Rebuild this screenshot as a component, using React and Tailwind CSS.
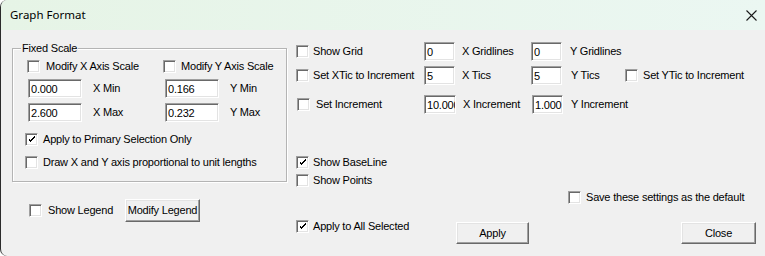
import React from "react";

const font = "font-['Liberation_Sans',Arial,sans-serif] text-[11px] tracking-[-0.2px] text-black";

function Check({ checked }) {
  return (
    <div className="w-[13px] h-[13px] shrink-0 bg-white border border-t-[#a0a0a0] border-l-[#a0a0a0] border-b-white border-r-white shadow-[inset_1px_1px_0_#696969,inset_-1px_-1px_0_#e3e3e3] flex items-center justify-center">
      {checked && (
        <svg width="7" height="7" viewBox="0 0 7 7" shapeRendering="crispEdges">
          <path d="M0 2h1v3h1v1h1v-1h1v-1h1v-1h1v-1h1v-2h-1v1h-1v1h-1v1h-1v1h-1v-1h-1v-1z" fill="#000" />
        </svg>
      )}
    </div>
  );
}

function CheckLabel({ checked, label, gap = "gap-[5px]", className = "" }) {
  return (
    <div className={`flex items-center ${gap} ${className}`}>
      <Check checked={checked} />
      <span className="whitespace-nowrap leading-[13px]">{label}</span>
    </div>
  );
}

function Field({ value, w = "w-[31px]" }) {
  return (
    <input
      readOnly
      value={value}
      className={`${w} h-[19px] shrink-0 bg-white pl-[2px] pr-0 outline-none border border-t-[#a0a0a0] border-l-[#a0a0a0] border-b-white border-r-white shadow-[inset_1px_1px_0_#696969,inset_-1px_-1px_0_#e3e3e3] text-[11px] leading-[15px] tracking-[-0.2px]`}
    />
  );
}

function Btn({ label, w, h = "h-[22px]", className = "" }) {
  return (
    <div
      className={`${w} ${h} ${className} shrink-0 bg-[#f0f0f0] flex items-center justify-center border border-t-white border-l-white border-b-[#696969] border-r-[#696969] shadow-[inset_-1px_-1px_0_#a0a0a0,inset_1px_1px_0_#e3e3e3]`}
    >
      <span className="leading-[13px]">{label}</span>
    </div>
  );
}

export default function App() {
  return (
    <div className={`w-[765px] h-[256px] overflow-hidden flex flex-col bg-[#f0f0f0] border-l border-[#2b2b2b] rounded-tl-[7px] rounded-bl-[7px] ${font}`}>
      {/* Title bar */}
      <div className="h-[30px] shrink-0 flex items-center justify-between pl-[9px] pr-[8px] bg-linear-to-r from-[#e6f4e6] to-[#ebf7f2]">
        <span className="font-['Noto_Sans',sans-serif] text-[11.5px] tracking-normal leading-[16px]">Graph Format</span>
        <svg width="11" height="11" viewBox="0 0 11 11">
          <path d="M0.5 0.5L10.5 10.5M10.5 0.5L0.5 10.5" stroke="#1a1a1a" strokeWidth="1.1" fill="none" />
        </svg>
      </div>

      {/* Body */}
      <div className="flex flex-1">
        {/* Left column */}
        <div className="w-[295px] shrink-0 pl-[11px] flex flex-col">
          <div className="relative mt-[18px] w-[275px] h-[134px] border border-[#b4b4b4] shadow-[inset_1px_1px_0_#fff,1px_1px_0_#fff] pt-[11px]">
            <span className="absolute -top-[7px] left-[8px] px-[1px] bg-[#f0f0f0] leading-[13px]">Fixed Scale</span>
            <div className="flex h-[13px] items-center pl-[14px]">
              <CheckLabel className="w-[136px]" gap="gap-[6px]" label="Modify X Axis Scale" />
              <CheckLabel gap="gap-[5px]" label="Modify Y Axis Scale" />
            </div>
            <div className="flex h-[19px] items-center mt-[6px] pl-[15px]">
              <div className="w-[137px] flex items-center">
                <Field value="0.000" w="w-[54px]" />
                <span className="ml-[11px]">X Min</span>
              </div>
              <div className="flex items-center">
                <Field value="0.166" w="w-[54px]" />
                <span className="ml-[11px]">Y Min</span>
              </div>
            </div>
            <div className="flex h-[19px] items-center mt-[5px] pl-[15px]">
              <div className="w-[137px] flex items-center">
                <Field value="2.600" w="w-[54px]" />
                <span className="ml-[11px]">X Max</span>
              </div>
              <div className="flex items-center">
                <Field value="0.232" w="w-[54px]" />
                <span className="ml-[11px]">Y Max</span>
              </div>
            </div>
            <div className="flex h-[13px] items-center mt-[11px] pl-[12px]">
              <CheckLabel checked label="Apply to Primary Selection Only" />
            </div>
            <div className="flex h-[13px] items-center mt-[10px] pl-[12px]">
              <CheckLabel label="Draw X and Y axis proportional to unit lengths" />
            </div>
          </div>
          <div className="flex items-center h-[23px] mt-[17px] pl-[17px]">
            <CheckLabel className="w-[96px]" gap="gap-[6px]" label="Show Legend" />
            <Btn label="Modify Legend" w="w-[75px]" h="h-[23px]" />
          </div>
        </div>

        {/* Right column */}
        <div className="flex-1 flex flex-col">
          <div className="flex h-[19px] items-center mt-[12px]">
            <CheckLabel className="w-[128px]" gap="gap-[4px]" label="Show Grid" />
            <div className="w-[107px] flex items-center">
              <Field value="0" />
              <span className="ml-[7px]">X Gridlines</span>
            </div>
            <div className="flex items-center">
              <Field value="0" />
              <span className="ml-[8px]">Y Gridlines</span>
            </div>
          </div>
          <div className="flex h-[19px] items-center mt-[5px]">
            <CheckLabel className="w-[128px]" gap="gap-[4px]" label="Set XTic to Increment" />
            <div className="w-[107px] flex items-center">
              <Field value="5" />
              <span className="ml-[7px]">X Tics</span>
            </div>
            <div className="w-[94px] flex items-center">
              <Field value="5" />
              <span className="ml-[9px]">Y Tics</span>
            </div>
            <CheckLabel gap="gap-[5px]" label="Set YTic to Increment" />
          </div>
          <div className="flex h-[19px] items-center mt-[10px]">
            <CheckLabel className="w-[127px] ml-[1px]" gap="gap-[6px]" label="Set Increment" />
            <div className="w-[108px] flex items-center">
              <Field value="10.000" w="w-[32px]" />
              <span className="ml-[7px]">X Increment</span>
            </div>
            <div className="flex items-center">
              <Field value="1.000" />
              <span className="ml-[8px]">Y Increment</span>
            </div>
          </div>
          <div className="flex h-[13px] items-center mt-[42px]">
            <CheckLabel checked gap="gap-[4px]" label="Show BaseLine" />
          </div>
          <div className="flex h-[13px] items-center mt-[5px]">
            <CheckLabel gap="gap-[4px]" label="Show Points" />
          </div>
          <div className="flex h-[13px] items-center mt-[4px] pl-[272px]">
            <CheckLabel gap="gap-[5px]" label="Save these settings as the default" />
          </div>
          <div className="flex items-start mt-[16px]">
            <CheckLabel checked className="w-[160px]" gap="gap-[4px]" label="Apply to All Selected" />
            <Btn label="Apply" w="w-[73px]" className="mt-[2px]" />
            <Btn label="Close" w="w-[75px]" className="mt-[2px] ml-[152px]" />
          </div>
        </div>
      </div>
    </div>
  );
}
